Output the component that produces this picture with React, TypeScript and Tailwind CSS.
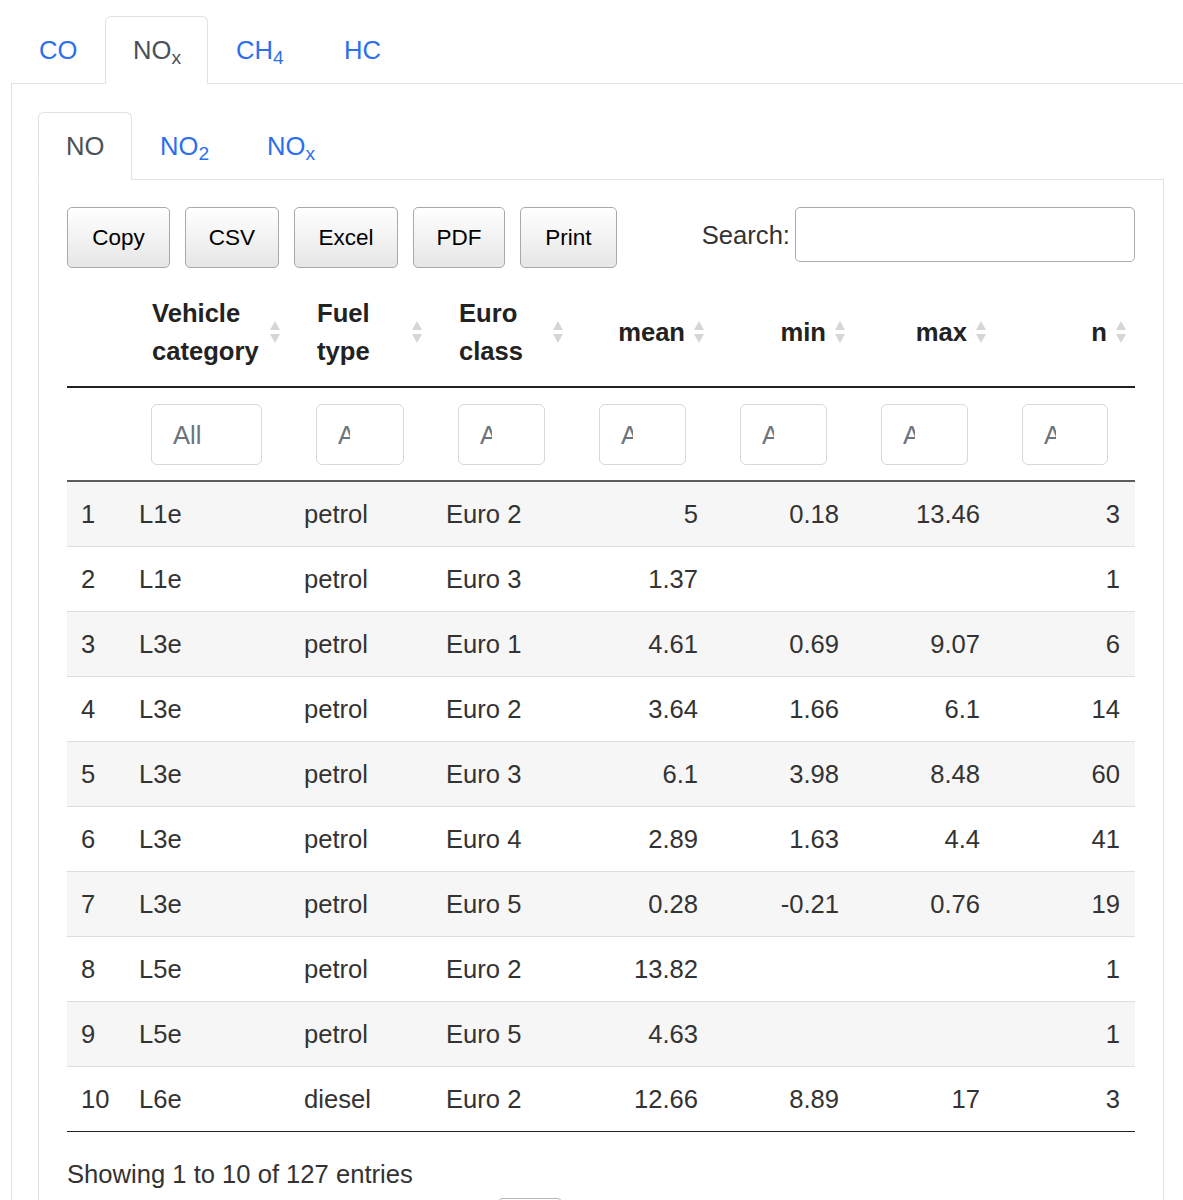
import React from 'react';

type Row = [string, string, string, string, string, string, string, string];

const rows: Row[] = [
  ['1', 'L1e', 'petrol', 'Euro 2', '5', '0.18', '13.46', '3'],
  ['2', 'L1e', 'petrol', 'Euro 3', '1.37', '', '', '1'],
  ['3', 'L3e', 'petrol', 'Euro 1', '4.61', '0.69', '9.07', '6'],
  ['4', 'L3e', 'petrol', 'Euro 2', '3.64', '1.66', '6.1', '14'],
  ['5', 'L3e', 'petrol', 'Euro 3', '6.1', '3.98', '8.48', '60'],
  ['6', 'L3e', 'petrol', 'Euro 4', '2.89', '1.63', '4.4', '41'],
  ['7', 'L3e', 'petrol', 'Euro 5', '0.28', '-0.21', '0.76', '19'],
  ['8', 'L5e', 'petrol', 'Euro 2', '13.82', '', '', '1'],
  ['9', 'L5e', 'petrol', 'Euro 5', '4.63', '', '', '1'],
  ['10', 'L6e', 'diesel', 'Euro 2', '12.66', '8.89', '17', '3'],
];

function SortIcon() {
  return (
    <svg
      width="12"
      height="24"
      viewBox="0 0 12 24"
      className="absolute right-[8px] top-1/2 -translate-y-1/2"
    >
      <path d="M6 1 L11 10 L1 10 Z" fill="#d6d6d6" />
      <path d="M1 14 L11 14 L6 23 Z" fill="#d6d6d6" />
    </svg>
  );
}

function Tab({ active, width, children }: { active?: boolean; width: string; children: React.ReactNode }) {
  return (
    <div
      className={`${width} h-[68px] -mb-px flex items-center pl-[27px] rounded-t-[6px] border ${
        active ? 'border-[#dee2e6] border-b-white bg-white text-[#495057]' : 'border-transparent text-[#2c6fec]'
      }`}
    >
      <span>{children}</span>
    </div>
  );
}

function FilterBox({ all }: { all?: boolean }) {
  return (
    <div className="h-[61px] w-full rounded-[6px] border border-[#d5d9de] bg-white flex items-center pl-[21px] text-[#6c737b]">
      {all ? (
        <span>All</span>
      ) : (
        <span className="inline-block w-[12px] overflow-hidden whitespace-nowrap">All</span>
      )}
    </div>
  );
}

const buttons = [
  { label: 'Copy', w: 'w-[103px]' },
  { label: 'CSV', w: 'w-[94px]' },
  { label: 'Excel', w: 'w-[104px]' },
  { label: 'PDF', w: 'w-[92px]' },
  { label: 'Print', w: 'w-[97px]' },
];

export default function App() {
  return (
    <div className="w-[1183px] h-[1200px] overflow-hidden bg-white font-['Liberation_Sans',Arial,sans-serif] text-[25.6px] leading-[38px] text-[#333]">
      <div className="pt-4 pl-[11px] w-[1190px]">
        {/* pollutant tabs */}
        <div className="flex h-[68px] border-b border-[#dee2e6]">
          <Tab width="w-[94px]">CO</Tab>
          <Tab width="w-[103px]" active>
            NO<sub>x</sub>
          </Tab>
          <Tab width="w-[108px]">
            CH<sub>4</sub>
          </Tab>
          <Tab width="w-[90px]">HC</Tab>
        </div>

        <div className="border-l border-[#dee2e6] pl-[26px] pt-[28px] h-[1200px]">
          <div className="w-[1126px]">
            {/* species tabs */}
            <div className="flex h-[68px] border-b border-[#dee2e6]">
              <Tab width="w-[94px]" active>
                NO
              </Tab>
              <Tab width="w-[107px]">
                NO<sub>2</sub>
              </Tab>
              <Tab width="w-[100px]">
                NO<sub>x</sub>
              </Tab>
            </div>

            <div className="border-l border-r border-[#dee2e6] px-[28px] pt-[27px] h-[1200px]">
              {/* toolbar */}
              <div className="flex justify-between items-start">
                <div className="flex gap-[15px]">
                  {buttons.map((b) => (
                    <button
                      key={b.label}
                      className={`${b.w} h-[61px] rounded-[5px] border border-[#a9a9a9] bg-linear-to-b from-white to-[#e6e6e6] text-[22.5px] text-black`}
                    >
                      {b.label}
                    </button>
                  ))}
                </div>
                <div className="flex items-center">
                  <span>Search:</span>
                  <div className="ml-[5px] w-[340px] h-[55px] rounded-[5px] border border-[#aaa] bg-white" />
                </div>
              </div>

              {/* data table */}
              <table className="mt-[9px] w-[1068px] table-fixed border-collapse">
                <colgroup>
                  <col className="w-[57px]" />
                  <col className="w-[165px]" />
                  <col className="w-[142px]" />
                  <col className="w-[141px]" />
                  <col className="w-[141px]" />
                  <col className="w-[141px]" />
                  <col className="w-[141px]" />
                  <col className="w-[140px]" />
                </colgroup>
                <thead>
                  <tr className="border-b-2 border-[#222] text-[#222] font-bold">
                    <th className="pt-[17px] pb-[16px]" />
                    <th className="relative pt-[17px] pb-[16px] px-[28px] text-left align-middle">
                      Vehicle
                      <br />
                      category
                      <SortIcon />
                    </th>
                    <th className="relative pt-[17px] pb-[16px] px-[28px] text-left align-middle">
                      Fuel
                      <br />
                      type
                      <SortIcon />
                    </th>
                    <th className="relative pt-[17px] pb-[16px] px-[28px] text-left align-middle">
                      Euro
                      <br />
                      class
                      <SortIcon />
                    </th>
                    {['mean', 'min', 'max', 'n'].map((h) => (
                      <th key={h} className="relative pt-[17px] pb-[16px] px-[28px] text-right align-middle">
                        {h}
                        <SortIcon />
                      </th>
                    ))}
                  </tr>
                  <tr className="border-b-2 border-[#5c5c5c]">
                    <td className="pt-[16px] pb-[15px]" />
                    <td className="pt-[16px] pb-[15px] px-[27px]">
                      <FilterBox all />
                    </td>
                    {[0, 1, 2, 3, 4, 5].map((i) => (
                      <td key={i} className="pt-[16px] pb-[15px] px-[27px]">
                        <FilterBox />
                      </td>
                    ))}
                  </tr>
                </thead>
                <tbody>
                  {rows.map((r, i) => (
                    <tr
                      key={r[0]}
                      className={`${i % 2 === 0 ? 'bg-[#f6f6f6]' : 'bg-white'} ${
                        i === 0 ? '' : 'border-t border-t-[#dddddd]'
                      } ${i === rows.length - 1 ? 'border-b border-b-[#222]' : ''}`}
                    >
                      <td className="h-[65px] pl-[14px] text-left">{r[0]}</td>
                      <td className="pl-[15px] text-left">{r[1]}</td>
                      <td className="pl-[15px] text-left">{r[2]}</td>
                      <td className="pl-[15px] text-left">{r[3]}</td>
                      <td className="pr-[15px] text-right">{r[4]}</td>
                      <td className="pr-[15px] text-right">{r[5]}</td>
                      <td className="pr-[15px] text-right">{r[6]}</td>
                      <td className="pr-[15px] text-right">{r[7]}</td>
                    </tr>
                  ))}
                </tbody>
              </table>

              {/* footer */}
              <div className="pt-[23px]">Showing 1 to 10 of 127 entries</div>
              <div className="mt-[5px] ml-[430px] w-[66px] h-[50px] rounded-[6px] border border-[#b5b5b5] bg-white" />
            </div>
          </div>
        </div>
      </div>
    </div>
  );
}
